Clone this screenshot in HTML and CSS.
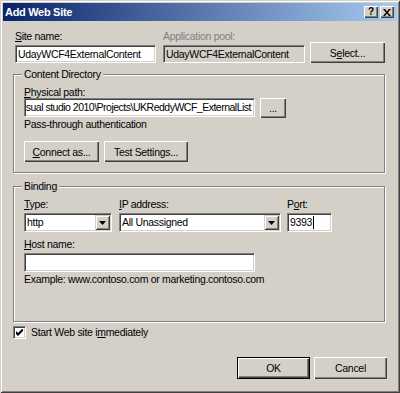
FILE: index.html
```html
<!DOCTYPE html>
<html>
<head>
  <title>Add Web Site</title>
  <link rel="stylesheet" href="styles.css">
</head>
<body>
  <div class="dialog">
    <div class="titlebar">
      <span class="title">Add Web Site</span>
      <div class="caption-btns">
        <span class="cap-btn help">?</span>
        <span class="cap-btn">
          <svg width="8" height="7" viewBox="0 0 8 7"><path d="M0 0h2l2 2.5L6 0h2L5 3.5 8 7H6L4 4.5 2 7H0l3-3.5z" fill="#000"/></svg>
        </span>
      </div>
    </div>

    <div class="client">
      <div class="top-row">
        <div class="field site">
          <div class="lbl"><u>S</u>ite name:</div>
          <div class="edit">UdayWCF4ExternalContent</div>
        </div>
        <div class="field pool">
          <div class="lbl disabled">Application pool:</div>
          <div class="edit readonly">UdayWCF4ExternalContent</div>
        </div>
        <div class="btn select-btn">S<u>e</u>lect...</div>
      </div>

      <div class="group content-dir">
        <span class="legend">Content Directory</span>
        <div class="lbl path-lbl"><u>P</u>hysical path:</div>
        <div class="path-row">
          <div class="edit path-edit"><span>sual studio 2010\Projects\UKReddyWCF_ExternalList</span></div>
          <div class="btn dots-btn">...</div>
        </div>
        <div class="lbl pass-lbl">Pass-through authentication</div>
        <div class="btn-row">
          <div class="btn connect-btn"><u>C</u>onnect as...</div>
          <div class="btn test-btn">Test Settin<u>g</u>s...</div>
        </div>
      </div>

      <div class="group binding">
        <span class="legend">Binding</span>
        <div class="bind-grid">
          <div class="field">
            <div class="lbl"><u>T</u>ype:</div>
            <div class="edit combo">
              <span>http</span>
              <span class="drop">
                <svg width="7" height="4" viewBox="0 0 7 4"><path d="M0 0h7L3.5 4z" fill="#000"/></svg>
              </span>
            </div>
          </div>
          <div class="field">
            <div class="lbl"><u>I</u>P address:</div>
            <div class="edit combo">
              <span>All Unassigned</span>
              <span class="drop">
                <svg width="7" height="4" viewBox="0 0 7 4"><path d="M0 0h7L3.5 4z" fill="#000"/></svg>
              </span>
            </div>
          </div>
          <div class="field">
            <div class="lbl">P<u>o</u>rt:</div>
            <div class="edit">9393<span class="caret"></span></div>
          </div>
        </div>
        <div class="lbl host-lbl"><u>H</u>ost name:</div>
        <div class="edit host-edit"></div>
        <div class="lbl example">Example: www.contoso.com or marketing.contoso.com</div>
      </div>

      <div class="check-row">
        <span class="checkbox">
          <svg width="7" height="7" viewBox="0 0 7 7"><path d="M0 2v3l2 2 5-5V-1L2 4z" fill="#000"/></svg>
        </span>
        <span class="lbl">Start Web site i<u>m</u>mediately</span>
      </div>

      <div class="footer">
        <div class="btn default">OK</div>
        <div class="btn">Cancel</div>
      </div>
    </div>
  </div>
</body>
</html>
```

FILE: styles.css
```css
/* Classic dialog look */
body {
  margin: 0;
  font-family: "Liberation Sans", Arial, sans-serif;
  font-size: 10.5px;
  letter-spacing: -0.3px;
  color: #000;
}

.dialog {
  width: 400px;
  height: 393px;
  box-sizing: border-box;
  padding: 3px;
  background-color: #d4d0c8;
  box-shadow: inset 1px 1px #d4d0c8, inset -1px -1px #404040, inset 2px 2px #fff, inset -2px -2px #808080;
}

.titlebar {
  height: 18px;
  display: flex;
  align-items: center;
  justify-content: space-between;
  background: linear-gradient(to right, #0a246a, #a6caf0);
}

.title {
  padding-left: 2px;
  color: #fff;
  font-weight: bold;
  font-size: 11px;
  letter-spacing: -0.3px;
}

.caption-btns {
  display: flex;
  gap: 2px;
  margin-right: 3px;
}

.cap-btn {
  width: 14px;
  height: 12px;
  box-sizing: border-box;
  display: flex;
  align-items: center;
  justify-content: center;
  background-color: #d4d0c8;
  box-shadow: inset 1px 1px #fff, inset -1px -1px #404040, inset -2px -2px #808080;
}

.cap-btn.help {
  font-weight: bold;
  font-size: 10px;
  line-height: 12px;
}

.client {
  padding: 0 12px 0 10px;
}

.lbl {
  line-height: 13px;
  white-space: nowrap;
}

.disabled {
  color: #808080;
}

.edit {
  height: 19px;
  box-sizing: border-box;
  padding-left: 2px;
  line-height: 17px;
  white-space: nowrap;
  overflow: hidden;
  background-color: #fff;
  border: 1px solid;
  border-color: #808080 #fff #fff #808080;
  box-shadow: inset 1px 1px #404040, inset -1px -1px #d4d0c8;
}

.edit.readonly {
  background-color: #d4d0c8;
}

.btn {
  height: 21px;
  box-sizing: border-box;
  display: flex;
  align-items: center;
  justify-content: center;
  white-space: nowrap;
  background-color: #d4d0c8;
  box-shadow: inset 1px 1px #fff, inset -1px -1px #404040, inset -2px -2px #808080;
}

.btn.default {
  border: 1px solid #000;
}

/* top row */
.top-row {
  margin-top: 9px;
  display: flex;
  align-items: flex-end;
}

.field .lbl {
  margin-bottom: 2px;
}

.site {
  margin-left: 2px;
  width: 141px;
}

.site .edit,
.pool .edit {
  height: 18px;
  line-height: 16px;
}

.pool {
  margin-left: 7px;
  width: 142px;
}

.select-btn {
  margin-left: 5px;
  width: 75px;
}

/* group boxes */
.group {
  position: relative;
  border: 1px solid #808080;
  box-shadow: inset 1px 1px #fff, 1px 1px #fff;
  padding: 11px 10px 10px;
}

.legend {
  position: absolute;
  top: -7px;
  left: 8px;
  padding: 0 2px;
  line-height: 13px;
  background-color: #d4d0c8;
}

.content-dir {
  margin-top: 11px;
}

.path-lbl {
  line-height: 12px;
}

.path-row {
  display: flex;
  align-items: flex-start;
}

.path-edit {
  width: 231px;
  display: flex;
  justify-content: flex-end;
  padding-left: 1px;
  padding-right: 3px;
  letter-spacing: -0.5px;
}

.dots-btn {
  margin-left: 5px;
  width: 26px;
  height: 20px;
  align-items: flex-end;
  padding-bottom: 4px;
}

.pass-lbl {
  margin-top: 0;
}

.btn-row {
  margin-top: 10px;
  display: flex;
  gap: 5px;
}

.connect-btn {
  width: 75px;
}

.test-btn {
  width: 84px;
}

.binding {
  margin-top: 13px;
  padding-bottom: 35px;
}

.bind-grid {
  display: grid;
  grid-template-columns: 88px 162px 44px;
  column-gap: 7px;
}

.bind-grid .field:last-child {
  margin-left: -1px;
}

.combo {
  display: flex;
  justify-content: space-between;
  padding-right: 1px;
}

.drop {
  width: 15px;
  height: 15px;
  margin-top: 1px;
  box-sizing: border-box;
  display: flex;
  align-items: center;
  justify-content: center;
  background-color: #d4d0c8;
  box-shadow: inset 1px 1px #d4d0c8, inset -1px -1px #404040, inset 2px 2px #fff, inset -2px -2px #808080;
}

.caret {
  display: inline-block;
  width: 1px;
  height: 13px;
  margin-left: 1px;
  vertical-align: -3px;
  background-color: #000;
}

.host-lbl {
  margin-top: 6px;
  margin-bottom: 2px;
}

.host-edit {
  width: 231px;
}

.example {
  margin-top: 1px;
}

/* checkbox */
.check-row {
  margin-top: 4px;
  display: flex;
  align-items: center;
  gap: 5px;
}

.checkbox {
  width: 13px;
  height: 13px;
  box-sizing: border-box;
  display: flex;
  align-items: center;
  justify-content: center;
  background-color: #fff;
  border: 1px solid;
  border-color: #808080 #fff #fff #808080;
  box-shadow: inset 1px 1px #404040, inset -1px -1px #d4d0c8;
}

.footer {
  margin-top: 18px;
  margin-right: -2px;
  display: flex;
  justify-content: flex-end;
  gap: 4px;
}

.footer .btn {
  width: 73px;
  height: 22px;
}
```
